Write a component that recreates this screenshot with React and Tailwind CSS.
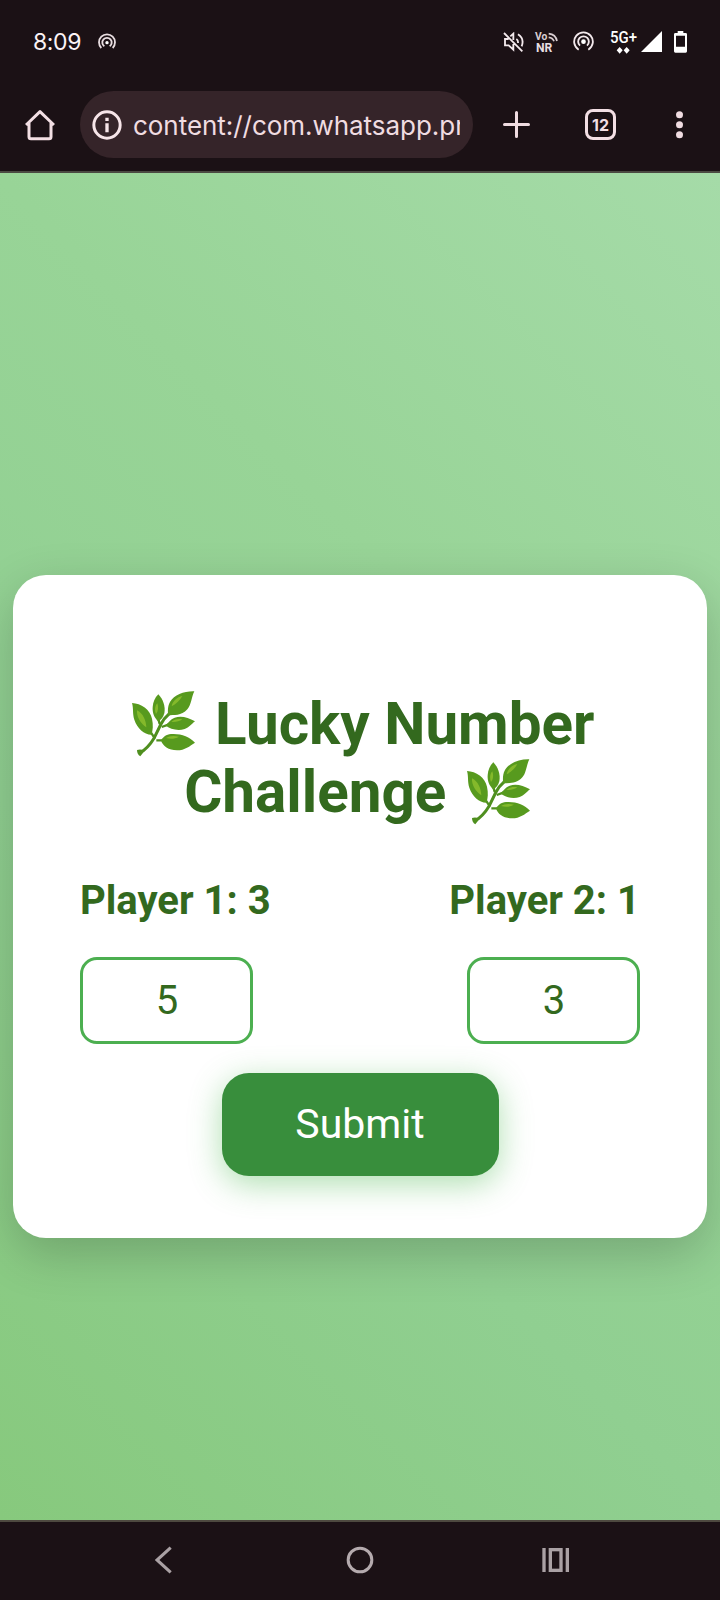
import React from "react";

function Herb() {
  return (
    <svg viewBox="15 30 225 204" className="inline-block h-[68px] w-[75px] align-[-14px]" aria-hidden="true">
      <path d="M55 220 C72 210 87 195 100 173 L120 132 Q128 116 145 101" fill="none" stroke="#4f8f1f" strokeWidth="9" strokeLinejoin="round" />
      <path d="M48 210 Q55 207 63 209 L66 218 L58 229 Q48 223 48 210Z" fill="#4f8f1f" />
      <path d="M112 116 L116 132 M90 158 L102 176 M122 141 L142 134 M106 181 L126 181" fill="none" stroke="#4f8f1f" strokeWidth="7" />
      <path d="M33 69 C60 70 88 89 93 116 C97 134 96 151 91 164 C69 163 49 146 40 119 C34 101 38 85 33 69Z" fill="#579a1e" />
      <path d="M112 43 C126 57 134 80 130 100 C127 113 120 119 112 125 C99 112 94 99 95 82 C96 66 101 54 112 43Z" fill="#579a1e" />
      <path d="M220 34 C190 33 160 44 147 66 C139 80 141 94 141 106 C158 105 181 108 199 88 C211 75 211 52 220 34Z" fill="#579a1e" />
      <path d="M222 124 C201 112 180 106 161 113 C147 119 144 127 133 136 C148 148 171 154 191 147 C205 143 211 132 222 124Z" fill="#579a1e" />
      <path d="M222 188 C205 169 179 160 150 162 C135 163 127 171 120 181 C125 199 143 211 168 211 C192 211 206 198 222 188Z" fill="#579a1e" />
      <path d="M48 91 C46 108 58 131 76 142 C75 120 66 100 48 91Z M109 70 C101 78 101 92 105 102 C112 94 113 81 109 70Z M184 48 C168 51 154 64 152 79 C164 72 177 62 184 48Z M184 118 C170 115 158 119 151 126 C164 127 175 124 184 118Z M174 170 C160 166 144 167 135 174 C149 178 161 177 174 170Z" fill="#84b92b" />
    </svg>
  );
}

function StatusBar() {
  return (
    <div className="flex h-[83px] items-center pl-[33px] pr-[33px] text-[#fbf3f6]">
      <span className="mt-[2px] w-[49px] whitespace-nowrap font-['Inter',sans-serif] text-[23px] leading-none tracking-[-0.4px]">8:09</span>
      <svg viewBox="0 0 54 48" className="mb-[1px] ml-4 h-4 w-[18px]" fill="none" stroke="#e9dee1" strokeWidth="5.5">
        <path d="M10 45 A24 24 0 1 1 44 45 M19 40 A14 14 0 1 1 35 40" />
        <circle cx="27" cy="29" r="5" fill="#fff" stroke="none" />
      </svg>
      <div className="ml-auto flex items-center">
        <svg viewBox="0 0 63 60" className="h-5 w-[21px]" fill="none" stroke="#f4eaed" strokeWidth="5.5">
          <path d="M3 3 L58 58 M17 21 H6 V40 H17 L31 53 V36 M22 13 L31 5 V24 M40 21 Q46 25 45 33 M45 7 Q65 20 56 43" />
        </svg>
        <svg viewBox="0 0 69 60" className="ml-[11px] h-5 w-[23px] overflow-visible">
          <text x="0" y="25" fontSize="31" fontWeight="700" fontFamily="Roboto, sans-serif" fill="#d9ced1" textLength="37" lengthAdjust="spacingAndGlyphs">Vo</text>
          <text x="3" y="60" fontSize="36" fontWeight="700" fontFamily="Roboto, sans-serif" fill="#e8dee1" textLength="49" lengthAdjust="spacingAndGlyphs">NR</text>
          <path d="M41 5 Q62 7 66 27 M41 16 Q53 17 57 28" fill="none" stroke="#d9ced1" strokeWidth="5" />
        </svg>
        <svg viewBox="0 0 63 60" className="mb-[1px] ml-[15px] h-5 w-[21px]" fill="none" stroke="#f4eaed" strokeWidth="5.5">
          <path d="M17 56 A28 28 0 1 1 46 56 M21 44 A16 16 0 1 1 42 44" />
          <circle cx="31.500" cy="32" r="7" fill="#fff" stroke="none" />
        </svg>
        <svg viewBox="0 0 81 69" className="ml-4 h-[23px] w-[27px] overflow-visible">
          <text x="0" y="38" fontSize="48" fontWeight="500" fontFamily="Roboto, sans-serif" fill="#fff" textLength="81" lengthAdjust="spacingAndGlyphs">5G+</text>
          <path d="M29 51 L38 61 L29 71 L20 61Z M50 51 L59 61 L50 71 L41 61Z" fill="#fff" />
        </svg>
        <svg viewBox="0 0 63 63" className="ml-1 h-[21px] w-[21px]"><path d="M0 63 L63 0 V63Z" fill="#fff" /></svg>
        <svg viewBox="0 0 39 66" className="ml-3 h-[22px] w-[13px]">
          <path fillRule="evenodd" fill="#fff" d="M11 0 H28 V6 H35 Q39 6 39 10 V61 Q39 65 35 65 H4 Q0 65 0 61 V10 Q0 6 4 6 H11Z M6 14 V47 H33 V14Z" />
        </svg>
      </div>
    </div>
  );
}

function BrowserBar() {
  return (
    <div className="flex h-[83px] items-center pl-[25px]">
      <svg viewBox="75 327 90 96" className="h-8 w-[30px] shrink-0" fill="none" stroke="#f3dfe4" strokeWidth="9" strokeLinejoin="round">
        <path d="M78 375 L120 335 L162 375 M87 369 V410 Q87 416 93 416 H147 Q153 416 153 410 V369" />
      </svg>
      <div className="ml-[25px] flex h-[67px] w-[393px] shrink-0 items-center rounded-full bg-[#352429] pl-[12px]">
        <svg viewBox="0 0 90 90" className="h-[30px] w-[30px] shrink-0" fill="none" stroke="#f7e5e9">
          <circle cx="45" cy="45" r="39.500" strokeWidth="9" />
          <path d="M45 40 V67 M45 23 V33" strokeWidth="10" />
        </svg>
        <div className="ml-[11px] mt-[3px] w-[327px] overflow-hidden whitespace-nowrap font-['Inter',sans-serif] text-[26px] leading-[40px] tracking-[-0.04px] text-[#f0dce1]">content://com.whatsapp.pr</div>
      </div>
      <svg viewBox="0 0 81 81" className="ml-[30px] h-[27px] w-[27px] shrink-0" stroke="#f0dce1" strokeWidth="9" strokeLinecap="round"><path d="M40.500 4.500 V76.500 M4.500 40.500 H76.500" /></svg>
      <div className="ml-[55px] flex h-[31px] w-[31px] shrink-0 items-center justify-center rounded-[8px] border-[3px] border-[#f3dfe4] font-['Inter',sans-serif] text-[16px] font-bold leading-none text-[#f3dfe4]">12</div>
      <svg viewBox="0 0 21 84" className="ml-[60px] h-7 w-[7px] shrink-0" fill="#f0dce1"><circle cx="10.500" cy="11" r="10.500" /><circle cx="10.500" cy="41" r="10.500" /><circle cx="10.500" cy="71" r="10.500" /></svg>
    </div>
  );
}

function Player({ name, score, value, right }) {
  return (
    <div className={right ? "flex flex-col items-end" : "flex flex-col items-start"}>
      <div className="h-[47px] whitespace-nowrap text-[40px] font-bold leading-[47px]">{name}: {score}</div>
      <input readOnly value={value} className="mt-[33px] h-[87px] w-[173px] rounded-[17px] border-[3px] border-[#4caf50] bg-white pl-[1px] text-center text-[40px] text-[#33691e] outline-none" />
    </div>
  );
}

function NavBar() {
  return (
    <div className="flex h-20 border-t-2 border-[#4d493f] bg-[#1b1115] pl-[155px] pt-[24px]">
      <svg viewBox="0 0 51 84" className="h-7 w-[17px]" fill="none" stroke="#aaa1a4" strokeWidth="9.500"><path d="M47 5 L6 42 L47 79" /></svg>
      <svg viewBox="0 0 84 84" className="ml-[174px] h-7 w-7" fill="none" stroke="#b5abae" strokeWidth="9"><circle cx="42" cy="42" r="35.500" /></svg>
      <svg viewBox="0 0 84 84" className="ml-[168px] h-7 w-7" fill="none" stroke="#aaa1a4" strokeWidth="10"><path d="M6 6 V78 M76 6 V78" /><rect x="25" y="11" width="32" height="62" /></svg>
    </div>
  );
}

export default function App() {
  return (
    <div className="flex h-[1600px] w-[720px] flex-col overflow-hidden bg-[#1b1115] font-['Roboto',sans-serif]">
      <header className="h-[173px] shrink-0 border-b-2 border-[#4b4a42] bg-[#1b1115]">
        <StatusBar />
        <BrowserBar />
      </header>
      <main className="flex h-[1347px] shrink-0 flex-col items-center overflow-hidden bg-[linear-gradient(45deg,#87c97d_0%,#90cf91_35%,#98d497_65%,#a5dba8_100%)] pt-[402px]">
        <section className="h-[663px] w-[694px] rounded-[33px] bg-white px-[67px] pt-[115px] text-[#33691e] shadow-[0_16px_50px_rgba(0,0,0,0.2)]">
          <h1 className="h-[136px] text-center text-[58.400px] font-bold leading-[68px]">
            <Herb /> Lucky Number<br />Challenge <Herb />
          </h1>
          <div className="mt-[51px] flex justify-between">
            <Player name="Player 1" score={3} value="5" />
            <Player name="Player 2" score={1} value="3" right />
          </div>
          <button className="mx-auto mt-[29px] block h-[103px] w-[277px] rounded-[27px] bg-[#388e3c] pt-[1px] text-[41px] text-white shadow-[0_8px_32px_rgba(76,185,80,0.45)]">Submit</button>
        </section>
      </main>
      <NavBar />
    </div>
  );
}
